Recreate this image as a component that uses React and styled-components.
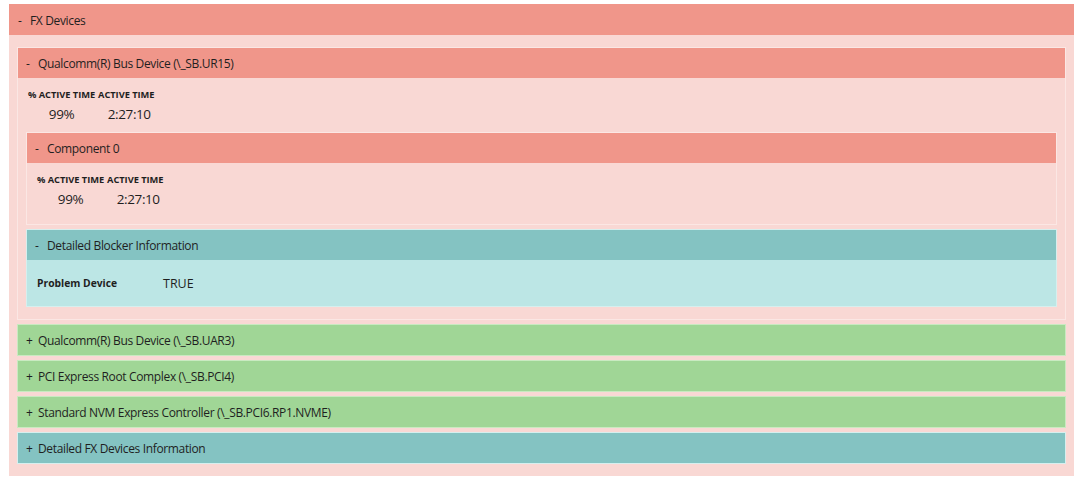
import React from "react";
import styled, { createGlobalStyle } from "styled-components";

const Global = createGlobalStyle`
  html, body { margin: 0; padding: 0; background: #ffffff; }
  body {
    font-family: "Open Sans", "Noto Sans", "Liberation Sans", sans-serif;
    color: #1f1f1f;
  }
`;

const palette = {
  red: { head: "#f0968a", body: "#f9d8d4", edge: "#fbe7e4" },
  green: { head: "#a0d696", body: "#d8f0d2", edge: "#c9eac1" },
  teal: { head: "#84c3c2", body: "#bce6e5", edge: "#d6efee" },
};

const Page = styled.div`
  padding: 4px 6px 5px 9px;
`;

const Box = styled.section`
  background: ${(p) => palette[p.$tone].body};
  border: ${(p) => (p.$flat ? "none" : `1px solid ${palette[p.$tone].edge}`)};
  & + & {
    margin-top: 4px;
  }
`;

const Header = styled.div`
  height: ${(p) => (p.$flat ? 31 : 30)}px;
  box-sizing: border-box;
  display: flex;
  align-items: center;
  padding: 2px 0 0 ${(p) => (p.$flat ? 9 : 8)}px;
  background: ${(p) => palette[p.$tone].head};
  font-size: 12px;
  letter-spacing: -0.35px;
  line-height: 16px;
  white-space: nowrap;
`;

const Sign = styled.span`
  display: inline-block;
  width: 12px;
  font-size: 12px;
`;

const Body = styled.div`
  padding: ${(p) => p.$pad};
`;

const Stats = styled.table`
  border-collapse: collapse;
  margin: 0 0 ${(p) => p.$after}px 2px;
  th {
    font-size: 9.3px;
    font-weight: 700;
    text-transform: uppercase;
    padding: 0 3px 0 0;
    line-height: 14px;
    text-align: left;
    white-space: nowrap;
    letter-spacing: -0.05px;
  }
  td {
    font-size: 13.5px;
    letter-spacing: -0.4px;
    text-align: center;
    padding: 3px 3px 0 0;
    line-height: 18px;
  }
  td + td {
    padding: 3px 0 0 3px;
  }
`;

const Pair = styled.div`
  display: flex;
  align-items: center;
  height: 46px;
  padding-left: 10px;
`;

const Key = styled.span`
  width: 126px;
  font-size: 10.3px;
  font-weight: 700;
`;

const Val = styled.span`
  font-size: 12.5px;
`;

function Section({ tone, open, title, flat, children }) {
  return (
    <Box $tone={tone} $flat={flat}>
      <Header $tone={tone} $flat={flat}>
        <Sign>{open ? "-" : "+"}</Sign>
        {title}
      </Header>
      {open && children}
    </Box>
  );
}

function ActiveStats({ after }) {
  return (
    <Stats $after={after}>
      <thead>
        <tr>
          <th>% Active Time</th>
          <th>Active Time</th>
        </tr>
      </thead>
      <tbody>
        <tr>
          <td>99%</td>
          <td>2:27:10</td>
        </tr>
      </tbody>
    </Stats>
  );
}

const closed = [
  { tone: "green", title: "Qualcomm(R) Bus Device (\\_SB.UAR3)" },
  { tone: "green", title: "PCI Express Root Complex (\\_SB.PCI4)" },
  { tone: "green", title: "Standard NVM Express Controller (\\_SB.PCI6.RP1.NVME)" },
  { tone: "teal", title: "Detailed FX Devices Information" },
];

export default function App() {
  return (
    <>
      <Global />
      <Page>
        <Section tone="red" open flat title="FX Devices">
          <Body $pad="12px 8px 12px">
            <Section tone="red" open title="Qualcomm(R) Bus Device (\_SB.UR15)">
              <Body $pad="10px 8px 12px 8px">
                <ActiveStats after={9} />
                <Section tone="red" open title="Component 0">
                  <Body $pad="10px 8px 16px 8px">
                    <ActiveStats after={0} />
                  </Body>
                </Section>
                <Section tone="teal" open title="Detailed Blocker Information">
                  <Pair>
                    <Key>Problem Device</Key>
                    <Val>TRUE</Val>
                  </Pair>
                </Section>
              </Body>
            </Section>
            {closed.map((c) => (
              <Section key={c.title} tone={c.tone} title={c.title} />
            ))}
          </Body>
        </Section>
      </Page>
    </>
  );
}
